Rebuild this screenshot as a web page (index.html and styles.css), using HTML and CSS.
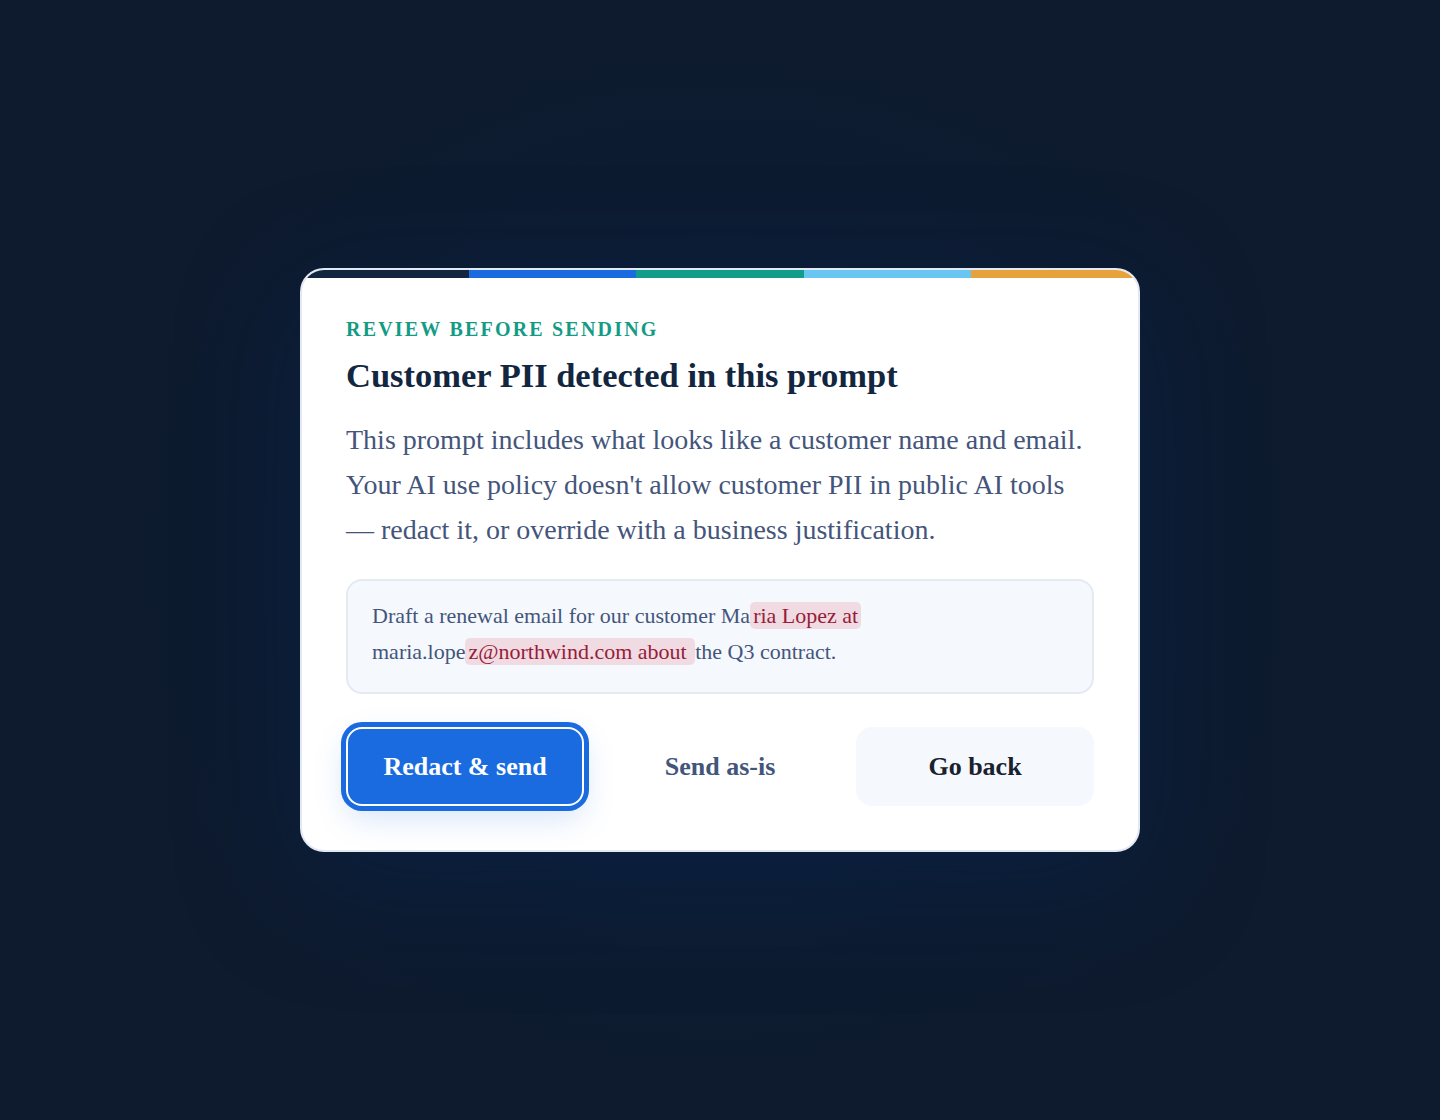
FILE: index.html
```html
<!DOCTYPE html>
<html lang="en">
<head>
<meta charset="utf-8">
<title>Review before sending</title>
<link rel="stylesheet" href="styles.css">
</head>
<body>
<main class="stage">
  <section class="card">
    <div class="stripe">
      <span class="seg seg-navy"></span>
      <span class="seg seg-blue"></span>
      <span class="seg seg-teal"></span>
      <span class="seg seg-sky"></span>
      <span class="seg seg-amber"></span>
    </div>
    <div class="content">
      <p class="eyebrow">REVIEW BEFORE SENDING</p>
      <h1 class="title">Customer PII detected in this prompt</h1>
      <p class="lead">This prompt includes what looks like a customer name and email. Your AI use policy doesn't allow customer PII in public AI tools — redact it, or override with a business justification.</p>
      <div class="prompt">Draft a renewal email for our customer Ma<mark class="pii">ria Lopez at</mark> maria.lope<mark class="pii">z@northwind.com about </mark>the Q3 contract.</div>
      <div class="actions">
        <button class="btn btn-primary" type="button">Redact &amp; send</button>
        <button class="btn btn-ghost" type="button">Send as-is</button>
        <button class="btn btn-soft" type="button">Go back</button>
      </div>
    </div>
  </section>
</main>
</body>
</html>
```

FILE: styles.css
```css
* { box-sizing: border-box; }
html, body { margin: 0; padding: 0; }
body {
  min-height: 1120px;
  background: radial-gradient(ellipse 640px 560px at 50% 50%, #0c1e3a 0%, #0c1c34 45%, #0d1b30 75%, #0e1b2e 100%);
  background-color: #0e1b2e;
  font-family: "Liberation Serif", "Times New Roman", serif;
}
.stage {
  height: 1120px;
  display: flex;
  align-items: center;
  justify-content: center;
}
.card {
  width: 840px;
  background: #ffffff;
  border: 2px solid #e3e9f2;
  border-radius: 24px;
  overflow: hidden;
  box-shadow: 0 30px 120px rgba(10, 40, 90, 0.35);
}
.stripe {
  display: flex;
  height: 8px;
}
.seg { flex: 1; }
.seg-navy { background: #12263f; }
.seg-blue { background: #1a6be0; }
.seg-teal { background: #129c8a; }
.seg-sky { background: #69c6f2; }
.seg-amber { background: #e8a23c; }
.content {
  padding: 39px 44px 44px;
}
.eyebrow {
  margin: 0;
  font-size: 20px;
  line-height: 24px;
  font-weight: 700;
  letter-spacing: 0.11em;
  color: #139b86;
}
.title {
  margin: 14px 0 0;
  font-size: 34.5px;
  line-height: 41px;
  font-weight: 700;
  letter-spacing: 0;
  color: #12263f;
}
.lead {
  margin: 21px 0 0;
  font-size: 28px;
  line-height: 45px;
  color: #44557b;
}
.prompt {
  margin-top: 27px;
  background: #f5f9fd;
  border: 2px solid #e4eaf2;
  border-radius: 16px;
  padding: 17px 24px 22px;
  font-size: 22px;
  line-height: 36px;
  color: #44557b;
}
.pii {
  background: #f0dbe2;
  color: #971c3a;
  border-radius: 5px;
  padding: 1px 3px;
}
.actions {
  margin-top: 33px;
  display: grid;
  grid-template-columns: repeat(3, 1fr);
  gap: 17px;
}
.btn {
  height: 79px;
  border: 0;
  border-radius: 16px;
  font-family: "Liberation Serif", "Times New Roman", serif;
  font-size: 26px;
  font-weight: 700;
  cursor: pointer;
}
.btn-primary {
  background: #1a6be0;
  color: #ffffff;
  outline: 0;
  box-shadow: inset 0 0 0 2px #ffffff, 0 0 0 5px #1a6be0, 0 12px 32px rgba(26, 107, 224, 0.18);
}
.btn-ghost {
  background: transparent;
  color: #44557b;
}
.btn-soft {
  background: #f5f8fc;
  color: #19212f;
}
```
